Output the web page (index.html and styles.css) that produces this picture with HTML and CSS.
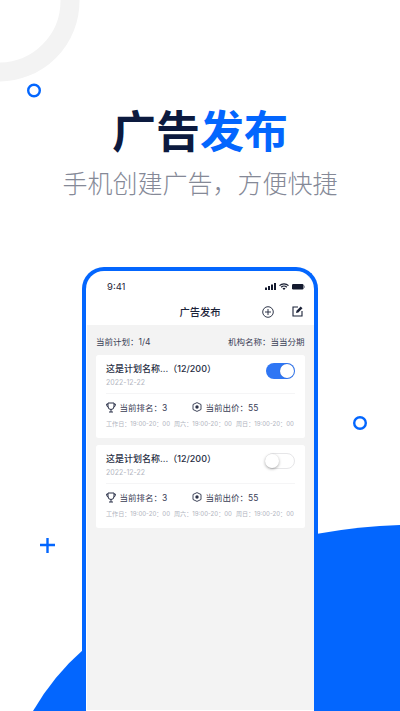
FILE: index.html
```html
<!DOCTYPE html>
<html lang="zh-CN">
<head>
<meta charset="utf-8">
<title>广告发布</title>
<link rel="stylesheet" href="styles.css">
</head>
<body>
<main class="page">
  <svg class="deco" viewBox="0 0 400 711" width="400" height="711" aria-hidden="true">
    <circle cx="-1" cy="1" r="71" fill="none" stroke="#f3f3f3" stroke-width="19"/>
    <circle cx="34" cy="90.5" r="5.8" fill="none" stroke="#0366fe" stroke-width="2.4"/>
    <circle cx="360" cy="423" r="5.8" fill="none" stroke="#0366fe" stroke-width="2.4"/>
    <path d="M40 545h15M47.5 538v15" fill="none" stroke="#0366fe" stroke-width="2.4"/>
    <path d="M33 711Q54 675 84 649V711Z" fill="#0366fe"/>
    <path d="M316 534Q360 526 400 525V711H316Z" fill="#0366fe"/>
  </svg>

  <header class="hero">
    <h1 class="title">广告<span class="accent">发布</span></h1>
    <p class="subtitle">手机创建广告，方便快捷</p>
  </header>

  <section class="phone">
    <div class="status">
      <span class="time">9:41</span>
      <svg class="status-icons" viewBox="0 0 41 9" width="41" height="9" aria-hidden="true">
        <path d="M0 5.5h2V8H0zM3 4h2v4H3zM6 2.5h2V8H6zM9 1h2v7H9z" fill="#141a2e"/>
        <path d="M14.500 3.600a6.500 6.500 0 0 1 9 0M16.200 5.300a4 4 0 0 1 5.600 0" fill="none" stroke="#141a2e" stroke-width="1.300"/>
        <path d="M17.500 6.500a2 2 0 0 1 3 0L19 8z" fill="#141a2e"/>
        <rect x="27" y="2" width="11.500" height="5.500" rx="1.200" fill="#141a2e"/>
        <rect x="39" y="3.700" width="1" height="2.200" fill="#9a9da8"/>
      </svg>
    </div>

    <nav class="nav">
      <span class="nav-title">广告发布</span>
      <svg class="nav-add" viewBox="0 0 12 12" width="12" height="12" aria-hidden="true">
        <circle cx="6" cy="6" r="5.300" fill="none" stroke="#1b2238" stroke-width=".9"/>
        <path d="M6 3v6M3 6h6" fill="none" stroke="#1b2238" stroke-width=".9"/>
      </svg>
      <svg class="nav-edit" viewBox="0 0 11 11" width="11" height="11" aria-hidden="true">
        <path d="M6 1H1v9h9V5" fill="none" stroke="#1b2238" stroke-width="1.100"/>
        <path d="M4 7l.5-2.300L8.700.5l1.800 1.800L6.300 6.500z" fill="#1b2238"/>
      </svg>
    </nav>

    <div class="screen">
      <div class="summary">
        <span>当前计划：1/4</span>
        <span>机构名称：当当分期</span>
      </div>

      <article class="card">
        <div class="card-head">
          <div>
            <h2 class="plan">这是计划名称...（12/200）</h2>
            <p class="date">2022-12-22</p>
          </div>
          <span class="toggle on"></span>
        </div>
        <div class="stats">
          <span class="stat rank">
            <svg viewBox="0 0 10 11" width="10" height="11" aria-hidden="true"><path d="M2 1h6v3.500a3 3 0 0 1-6 0zM2 2H.7v1.300A2 2 0 0 0 2.500 5M8 2h1.300v1.300A2 2 0 0 1 7.500 5M5 7.500V10M3 10h4" fill="none" stroke="#2b3148" stroke-width="1"/></svg>
            当前排名：3
          </span>
          <span class="stat">
            <svg viewBox="0 0 10 10" width="10" height="10" aria-hidden="true"><path d="M5 .6L9 2.500V7.500L5 9.400 1 7.500V2.500z" fill="none" stroke="#2b3148" stroke-width=".9"/><circle cx="5" cy="5" r="1.700" fill="#2b3148"/></svg>
            当前出价：55
          </span>
        </div>
        <div class="hours">
          <span>工作日：19:00-20：00</span><span>周六：19:00-20：00</span><span>周日：19:00-20：00</span>
        </div>
      </article>

      <article class="card">
        <div class="card-head">
          <div>
            <h2 class="plan">这是计划名称...（12/200）</h2>
            <p class="date">2022-12-22</p>
          </div>
          <span class="toggle"></span>
        </div>
        <div class="stats">
          <span class="stat rank">
            <svg viewBox="0 0 10 11" width="10" height="11" aria-hidden="true"><path d="M2 1h6v3.500a3 3 0 0 1-6 0zM2 2H.7v1.300A2 2 0 0 0 2.500 5M8 2h1.300v1.300A2 2 0 0 1 7.500 5M5 7.500V10M3 10h4" fill="none" stroke="#2b3148" stroke-width="1"/></svg>
            当前排名：3
          </span>
          <span class="stat">
            <svg viewBox="0 0 10 10" width="10" height="10" aria-hidden="true"><path d="M5 .6L9 2.500V7.500L5 9.400 1 7.500V2.500z" fill="none" stroke="#2b3148" stroke-width=".9"/><circle cx="5" cy="5" r="1.700" fill="#2b3148"/></svg>
            当前出价：55
          </span>
        </div>
        <div class="hours">
          <span>工作日：19:00-20：00</span><span>周六：19:00-20：00</span><span>周日：19:00-20：00</span>
        </div>
      </article>
    </div>
  </section>
</main>
</body>
</html>
```

FILE: styles.css
```css
* { box-sizing: border-box; margin: 0; padding: 0; }
html, body { width: 400px; height: 711px; overflow: hidden; background: #fff; }
body { font-family: Inter, "Noto Sans CJK SC", sans-serif; color: #2b3148; }

.page { position: relative; width: 400px; height: 711px; overflow: hidden; display: flex; flex-direction: column; align-items: center; padding-top: 100px; }
.deco { position: absolute; left: 0; top: 0; }

.hero { position: relative; display: flex; flex-direction: column; align-items: center; }
.title { font-family: "Noto Sans CJK SC", sans-serif; font-size: 44px; line-height: 58px; font-weight: 700; color: #0c1a3f; }
.accent { color: #0366fe; }
.subtitle { font-family: "Noto Sans CJK SC", sans-serif; font-size: 25px; line-height: 36px; margin-top: 6px; font-weight: 300; color: #858997; }

.phone { position: relative; width: 236px; flex: 1; margin-top: 67px; border: 4px solid #0366fe; border-bottom: 0; border-radius: 22px 22px 0 0; background: #fff; display: flex; flex-direction: column; padding-bottom: 1px; }

.status { display: flex; justify-content: space-between; align-items: center; height: 24px; padding: 7px 8px 0 21px; }
.time { font-size: 9.500px; color: #1f2538; }

.nav { position: relative; height: 30px; display: flex; align-items: center; justify-content: flex-end; gap: 18px; padding: 3.500px 11.500px 0 0; }
.nav-title { position: absolute; left: 0; right: 0; top: 10px; text-align: center; font-size: 10.300px; line-height: 14px; font-weight: 500; color: #1b2238; font-family: "Noto Sans CJK SC", sans-serif; }

.screen { flex: 1; margin: 0 .5px 0 1px; background: #f3f3f3; padding: 0 9px; }
.summary { display: flex; justify-content: space-between; height: 30px; padding-top: 11px; font-size: 8.500px; line-height: 12px; color: #3a4056; }

.card { height: 82.500px; margin-bottom: 7.500px; padding: 7px 10px 0; background: #fff; border-radius: 2.500px; }
.card-head { display: flex; justify-content: space-between; height: 31.500px; border-bottom: 1px solid #f5f5f6; }
.plan { font-size: 9px; line-height: 13px; font-weight: 500; color: #262c42; white-space: nowrap; }
.date { font-size: 7px; line-height: 10px; margin-top: 3px; color: #b3b6c1; }

.toggle { position: relative; width: 30px; height: 16px; margin: 1px 0 0; border-radius: 8px; border: 1px solid #e6e6e8; background: #fff; }
.toggle::after { content: ""; position: absolute; left: -1px; top: 0; width: 14px; height: 14px; border-radius: 50%; background: #fff; box-shadow: 0 1px 3px rgba(0, 0, 0, .35); }
.toggle.on { width: 29px; margin-right: -.5px; border: 0; background: #2f76f4; }
.toggle.on::after { left: auto; right: 1px; top: 1px; box-shadow: 0 0 1px rgba(0, 0, 0, .3); }

.stats { display: flex; margin-top: 7px; height: 13px; align-items: center; font-size: 8.500px; color: #3a4056; }
.stat { display: flex; align-items: center; gap: 3.500px; white-space: nowrap; }
.rank { width: 86px; }
.hours { display: flex; gap: 4px; margin-top: 5.500px; font-size: 6.100px; line-height: 10px; color: #b0b3be; white-space: nowrap; }
```
